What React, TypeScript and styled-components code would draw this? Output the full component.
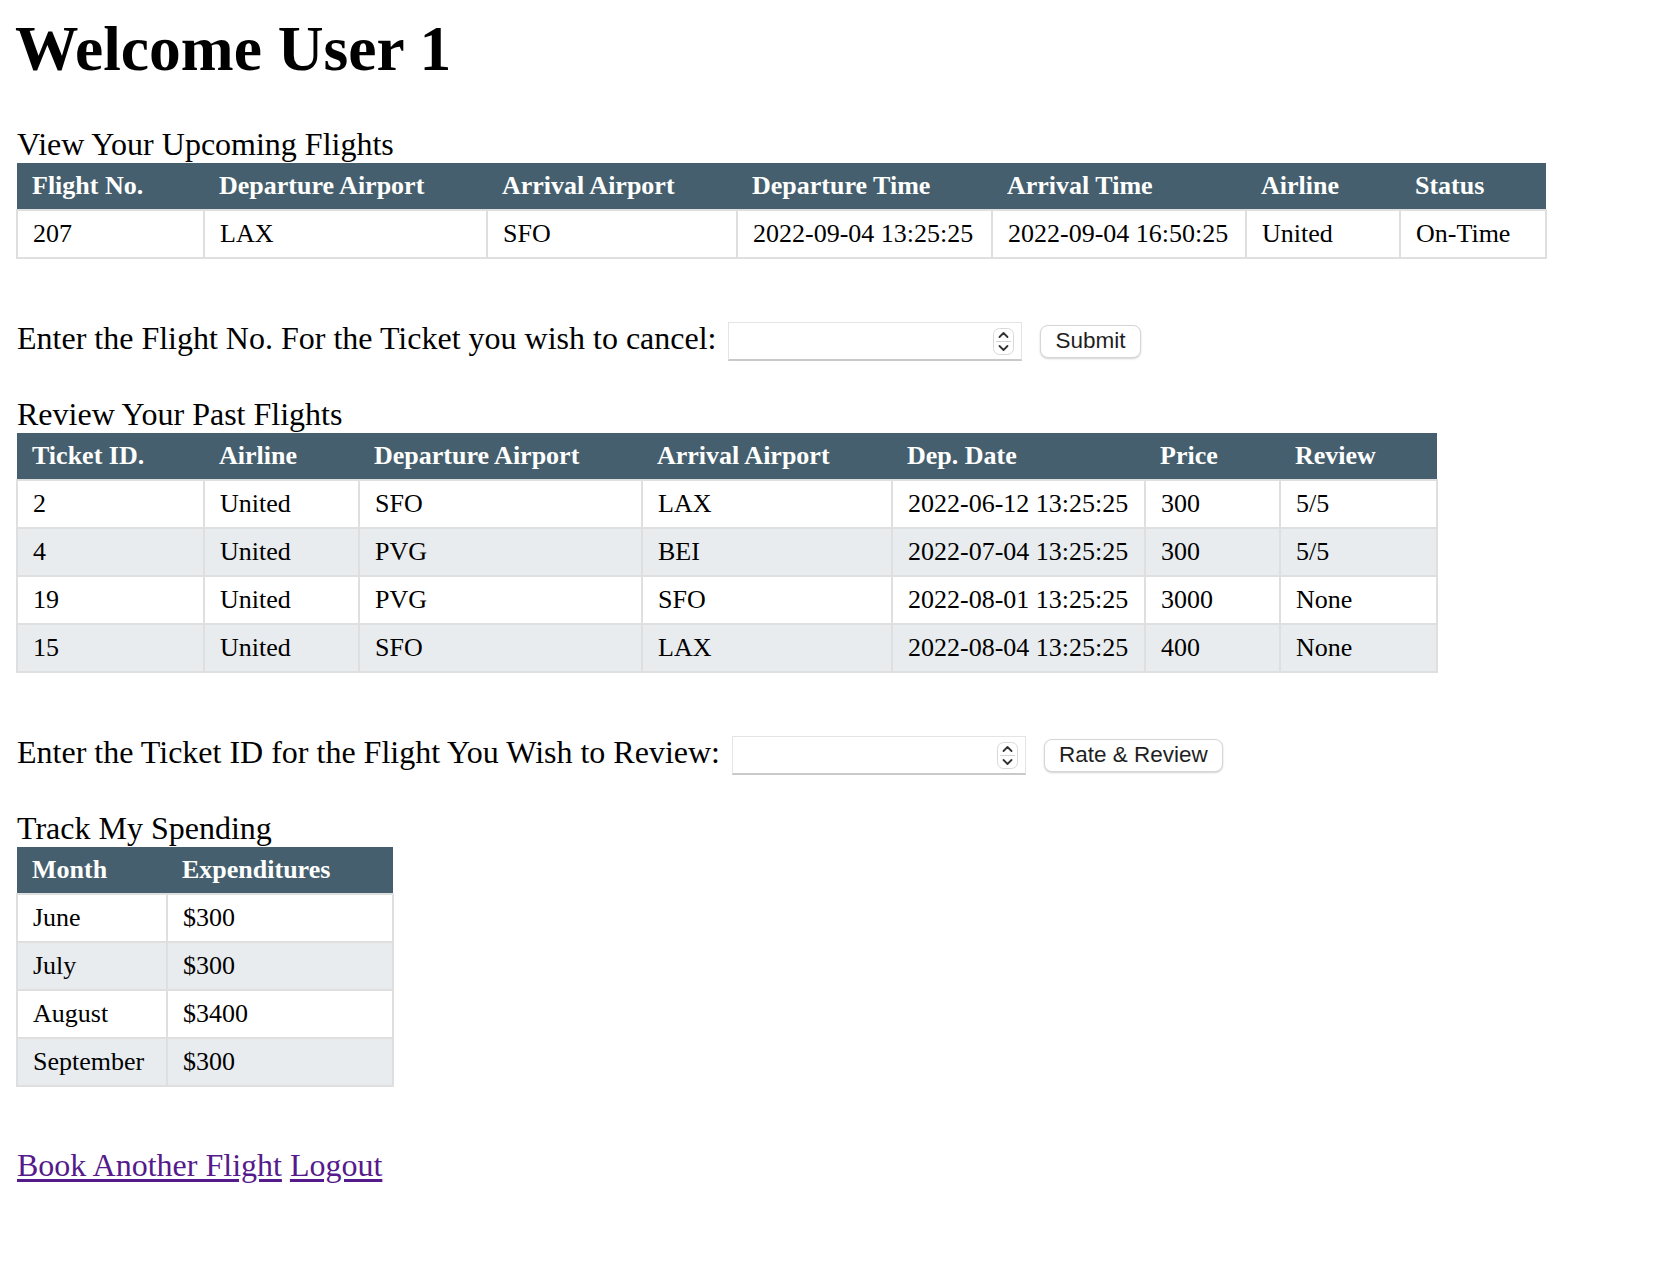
import React from "react";
import styled, { createGlobalStyle } from "styled-components";

const GlobalStyle = createGlobalStyle`
  html, body { margin: 0; padding: 0; background: #ffffff; }
  body {
    font-family: "Liberation Serif", "Times New Roman", serif;
    color: #000000;
  }
`;

const Page = styled.main`
  box-sizing: border-box;
  min-height: 1284px;
  padding: 13px 16px 80px;
`;

const Title = styled.h1`
  margin: 0 0 0 -1px;
  font-size: 63.5px;
  font-weight: 700;
  line-height: 72px;
`;

const SectionLabel = styled.div<{ $top: number }>`
  margin-top: ${(p) => p.$top}px;
  margin-left: 1px;
  font-size: 32px;
  line-height: 37px;
`;

const Table = styled.table<{ $width: number }>`
  width: ${(p) => p.$width}px;
  border-collapse: collapse;
  table-layout: fixed;
  font-size: 26px;
  line-height: 30px;
`;

const HeadCell = styled.th`
  background: #455f6e;
  color: #ffffff;
  font-weight: 700;
  text-align: left;
  padding: 8px 15px;
  white-space: nowrap;
`;

const BodyRow = styled.tr`
  background: #ffffff;
  &:nth-child(even) { background: #e8ecef; }
`;

const BodyCell = styled.td`
  border: 2px solid #dfdfdf;
  padding: 8px 15px;
  white-space: nowrap;
`;

const FormRow = styled.div<{ $top: number }>`
  display: flex;
  align-items: center;
  height: 40px;
  margin-top: ${(p) => p.$top}px;
`;

const FormLabel = styled.label`
  font-size: 32px;
  line-height: 37px;
  padding: 0 0 6px 1px;
  white-space: nowrap;
`;

const InputWrap = styled.div`
  position: relative;
  margin-left: 12px;
  width: 294px;
  height: 39px;
`;

const NumberInput = styled.input`
  box-sizing: border-box;
  width: 100%;
  height: 100%;
  border: 1px solid #e4e4e4;
  border-bottom: 2px solid #c9c9c9;
  background: #ffffff;
  padding: 0 40px 0 8px;
  font-family: "Liberation Sans", Arial, sans-serif;
  font-size: 22px;
  outline: none;
`;

const Spinner = styled.svg`
  position: absolute;
  right: 8px;
  top: 6px;
  pointer-events: none;
`;

const Button = styled.button`
  margin-left: 18px;
  height: 33px;
  padding: 0 14px;
  background: #ffffff;
  border: 1px solid #d6d6d6;
  border-radius: 8px;
  box-shadow: 0 1px 2px rgba(0, 0, 0, 0.18);
  font-family: "Liberation Sans", Arial, sans-serif;
  font-size: 22.5px;
  color: #1f1f1f;
  line-height: 1;
  cursor: pointer;
`;

const LinkRow = styled.div`
  margin-top: 60px;
  margin-left: 1px;
  font-size: 32px;
  line-height: 37px;
`;

const NavLink = styled.a`
  color: #551a8b;
  text-decoration: underline;
  text-underline-offset: 3px;
`;

type TableProps = {
  widths: number[];
  headers: string[];
  rows: string[][];
};

function DataTable({ widths, headers, rows }: TableProps) {
  const total = widths.reduce((a, b) => a + b, 0);
  return (
    <Table $width={total}>
      <colgroup>
        {widths.map((w, i) => (
          <col key={i} style={{ width: w }} />
        ))}
      </colgroup>
      <thead>
        <tr>
          {headers.map((h) => (
            <HeadCell key={h}>{h}</HeadCell>
          ))}
        </tr>
      </thead>
      <tbody>
        {rows.map((r, i) => (
          <BodyRow key={i}>
            {r.map((c, j) => (
              <BodyCell key={j}>{c}</BodyCell>
            ))}
          </BodyRow>
        ))}
      </tbody>
    </Table>
  );
}

function SpinnerIcon() {
  return (
    <Spinner width="21" height="27" viewBox="0 0 21 27">
      <rect x="0.5" y="0.5" width="20" height="26" rx="6" fill="#ffffff" stroke="#d8d8d8" />
      <line x1="3" y1="13.5" x2="18" y2="13.5" stroke="#d4d4d4" strokeWidth="1" />
      <path d="M6.5 9 L10.5 5 L14.5 9" fill="none" stroke="#333" strokeWidth="1.8" strokeLinecap="round" strokeLinejoin="round" />
      <path d="M6.5 18 L10.5 22 L14.5 18" fill="none" stroke="#333" strokeWidth="1.8" strokeLinecap="round" strokeLinejoin="round" />
    </Spinner>
  );
}

function EntryForm({ top, label, action }: { top: number; label: string; action: string }) {
  return (
    <FormRow $top={top}>
      <FormLabel>{label}</FormLabel>
      <InputWrap>
        <NumberInput type="text" inputMode="numeric" aria-label={label} />
        <SpinnerIcon />
      </InputWrap>
      <Button type="button">{action}</Button>
    </FormRow>
  );
}

export default function App() {
  return (
    <>
      <GlobalStyle />
      <Page>
        <Title>Welcome User 1</Title>

        <SectionLabel $top={41}>View Your Upcoming Flights</SectionLabel>
        <DataTable
          widths={[187, 283, 250, 255, 254, 154, 146]}
          headers={["Flight No.", "Departure Airport", "Arrival Airport", "Departure Time", "Arrival Time", "Airline", "Status"]}
          rows={[["207", "LAX", "SFO", "2022-09-04 13:25:25", "2022-09-04 16:50:25", "United", "On-Time"]]}
        />

        <EntryForm top={62} label="Enter the Flight No. For the Ticket you wish to cancel:" action="Submit" />

        <SectionLabel $top={35}>Review Your Past Flights</SectionLabel>
        <DataTable
          widths={[187, 155, 283, 250, 253, 135, 157]}
          headers={["Ticket ID.", "Airline", "Departure Airport", "Arrival Airport", "Dep. Date", "Price", "Review"]}
          rows={[
            ["2", "United", "SFO", "LAX", "2022-06-12 13:25:25", "300", "5/5"],
            ["4", "United", "PVG", "BEI", "2022-07-04 13:25:25", "300", "5/5"],
            ["19", "United", "PVG", "SFO", "2022-08-01 13:25:25", "3000", "None"],
            ["15", "United", "SFO", "LAX", "2022-08-04 13:25:25", "400", "None"],
          ]}
        />

        <EntryForm top={62} label="Enter the Ticket ID for the Flight You Wish to Review:" action="Rate & Review" />

        <SectionLabel $top={35}>Track My Spending</SectionLabel>
        <DataTable
          widths={[150, 226]}
          headers={["Month", "Expenditures"]}
          rows={[
            ["June", "$300"],
            ["July", "$300"],
            ["August", "$3400"],
            ["September", "$300"],
          ]}
        />

        <LinkRow>
          <NavLink href="#book">Book Another Flight</NavLink>{" "}
          <NavLink href="#logout">Logout</NavLink>
        </LinkRow>
      </Page>
    </>
  );
}
